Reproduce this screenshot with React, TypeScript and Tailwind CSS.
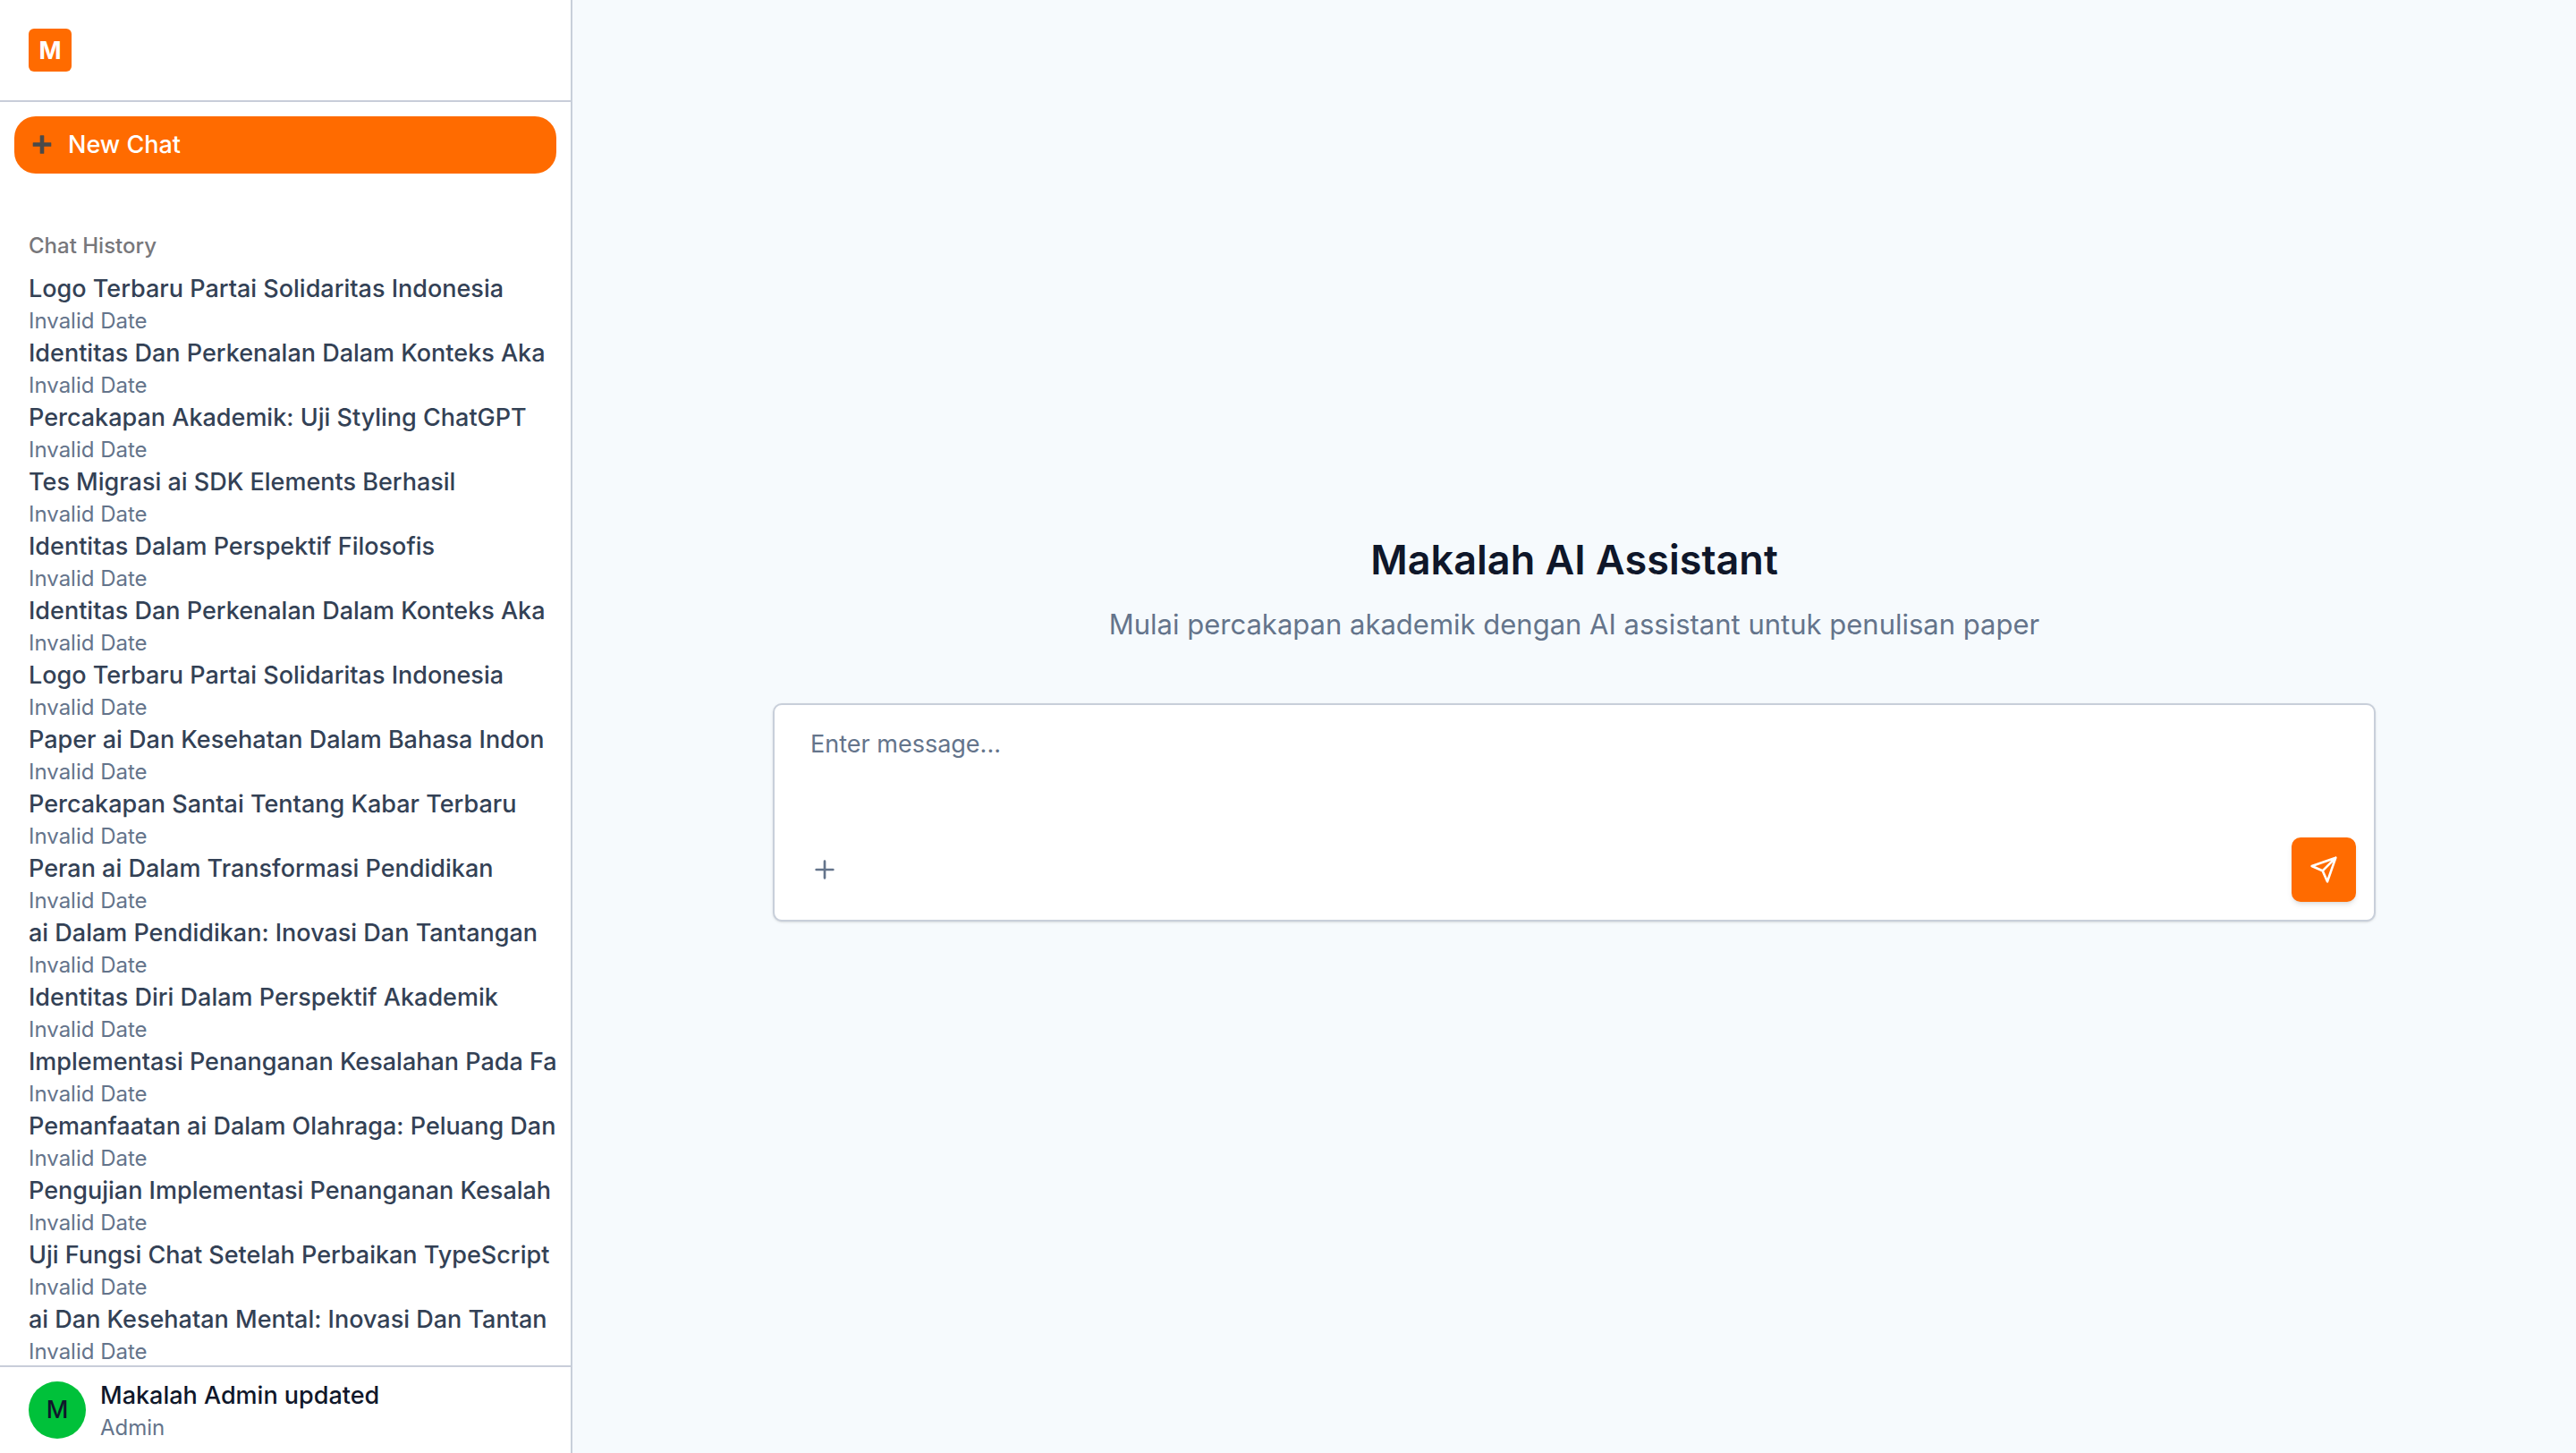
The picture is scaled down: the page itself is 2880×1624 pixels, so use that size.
import React from "react";

const chats = [
  "Logo Terbaru Partai Solidaritas Indonesia",
  "Identitas Dan Perkenalan Dalam Konteks Aka",
  "Percakapan Akademik: Uji Styling ChatGPT",
  "Tes Migrasi ai SDK Elements Berhasil",
  "Identitas Dalam Perspektif Filosofis",
  "Identitas Dan Perkenalan Dalam Konteks Aka",
  "Logo Terbaru Partai Solidaritas Indonesia",
  "Paper ai Dan Kesehatan Dalam Bahasa Indon",
  "Percakapan Santai Tentang Kabar Terbaru",
  "Peran ai Dalam Transformasi Pendidikan",
  "ai Dalam Pendidikan: Inovasi Dan Tantangan",
  "Identitas Diri Dalam Perspektif Akademik",
  "Implementasi Penanganan Kesalahan Pada Fa",
  "Pemanfaatan ai Dalam Olahraga: Peluang Dan",
  "Pengujian Implementasi Penanganan Kesalah",
  "Uji Fungsi Chat Setelah Perbaikan TypeScript",
  "ai Dan Kesehatan Mental: Inovasi Dan Tantan",
];

function Sidebar() {
  return (
    <aside className="flex w-[640px] shrink-0 flex-col border-r-2 border-[#c8cfda] bg-white">
      <header className="flex border-b-2 border-[#c8cdd9] p-8">
        <div className="flex size-12 items-center justify-center rounded-md bg-[#ff6b00] text-[27px] leading-none font-bold text-white">
          M
        </div>
      </header>

      <div className="px-4 pt-4">
        <button
          type="button"
          className="flex h-16 w-full items-center gap-[18px] rounded-3xl bg-[#ff6b00] px-5 text-[27px] font-medium text-white"
        >
          <svg viewBox="0 0 22 22" className="size-[22px] text-[#4a4a4a]" fill="currentColor" aria-hidden="true">
            <path d="M9.300 0.200h3.400a.6.6 0 0 1 .6.6v7.400h7.400a.6.6 0 0 1 .6.6v3.400a.6.6 0 0 1-.6.6h-7.400v7.400a.6.6 0 0 1-.6.6h-3.400a.6.6 0 0 1-.6-.6v-7.400h-7.400a.6.6 0 0 1-.6-.6v-3.400a.6.6 0 0 1 .6-.6h7.400v-7.400a.6.6 0 0 1 .6-.6z" />
          </svg>
          New Chat
        </button>
      </div>

      <nav aria-label="Chat History" className="min-h-0 flex-1 overflow-hidden pt-[65px] pr-4 pl-8">
        <h2 className="mb-3 text-2xl font-medium text-[#77777b]">Chat History</h2>
        <ul>
          {chats.map((title, i) => (
            <li key={i}>
              <a href="#chat" className="block overflow-hidden whitespace-nowrap">
                <span className="block text-[27px] leading-10 font-medium text-[#334155]">{title}</span>
                <span className="block text-2xl text-[#64748b]">Invalid Date</span>
              </a>
            </li>
          ))}
        </ul>
      </nav>

      <footer className="flex items-center gap-4 border-t-2 border-[#c8cdd9] px-8 py-3">
        <div className="flex size-16 shrink-0 items-center justify-center rounded-full bg-[#00c13a] text-[27px] font-medium text-[#0f172a]">
          M
        </div>
        <div>
          <p className="text-[27px] leading-10 font-medium text-[#0f172a]">Makalah Admin updated</p>
          <p className="text-2xl text-[#64748b]">Admin</p>
        </div>
      </footer>
    </aside>
  );
}

function Composer() {
  return (
    <form
      onSubmit={(e) => e.preventDefault()}
      className="w-full rounded-[10px] border-2 border-[#c8cfda] bg-white p-5 shadow-sm"
    >
      <textarea
        aria-label="Message"
        placeholder="Enter message..."
        className="block h-32 w-full resize-none px-5 py-1 text-[27px] leading-10 text-[#0f172a] outline-none placeholder:text-[#64748b]"
      />
      <div className="flex items-center justify-between">
        <button type="button" aria-label="Add attachment" className="flex size-[72px] items-center justify-center text-[#64748b]">
          <svg viewBox="0 0 24 24" className="size-8" fill="none" stroke="currentColor" strokeWidth="2" strokeLinecap="round" aria-hidden="true">
            <path d="M5 12h14M12 5v14" />
          </svg>
        </button>
        <button
          type="submit"
          aria-label="Send message"
          className="flex size-[72px] items-center justify-center rounded-[10px] bg-[#ff6b00] text-white shadow-md"
        >
          <svg viewBox="0 0 24 24" className="size-8" fill="none" stroke="currentColor" strokeWidth="2" strokeLinecap="round" strokeLinejoin="round" aria-hidden="true">
            <path d="M22 2 11 13M22 2 15 22 11 13 2 9z" />
          </svg>
        </button>
      </div>
    </form>
  );
}

export default function App() {
  return (
    <div className="flex h-screen bg-[#f6fafd] font-['Inter','Liberation_Sans',sans-serif]">
      <Sidebar />
      <main className="flex flex-1 flex-col items-center justify-center px-12">
        <div className="flex w-full max-w-[1792px] flex-col items-center">
          <h1 className="text-[45px] leading-16 font-semibold text-[#0f172a]">Makalah AI Assistant</h1>
          <p className="mt-4 mb-16 text-[31px] leading-12 text-[#64748b]">
            Mulai percakapan akademik dengan AI assistant untuk penulisan paper
          </p>
          <Composer />
        </div>
      </main>
    </div>
  );
}
